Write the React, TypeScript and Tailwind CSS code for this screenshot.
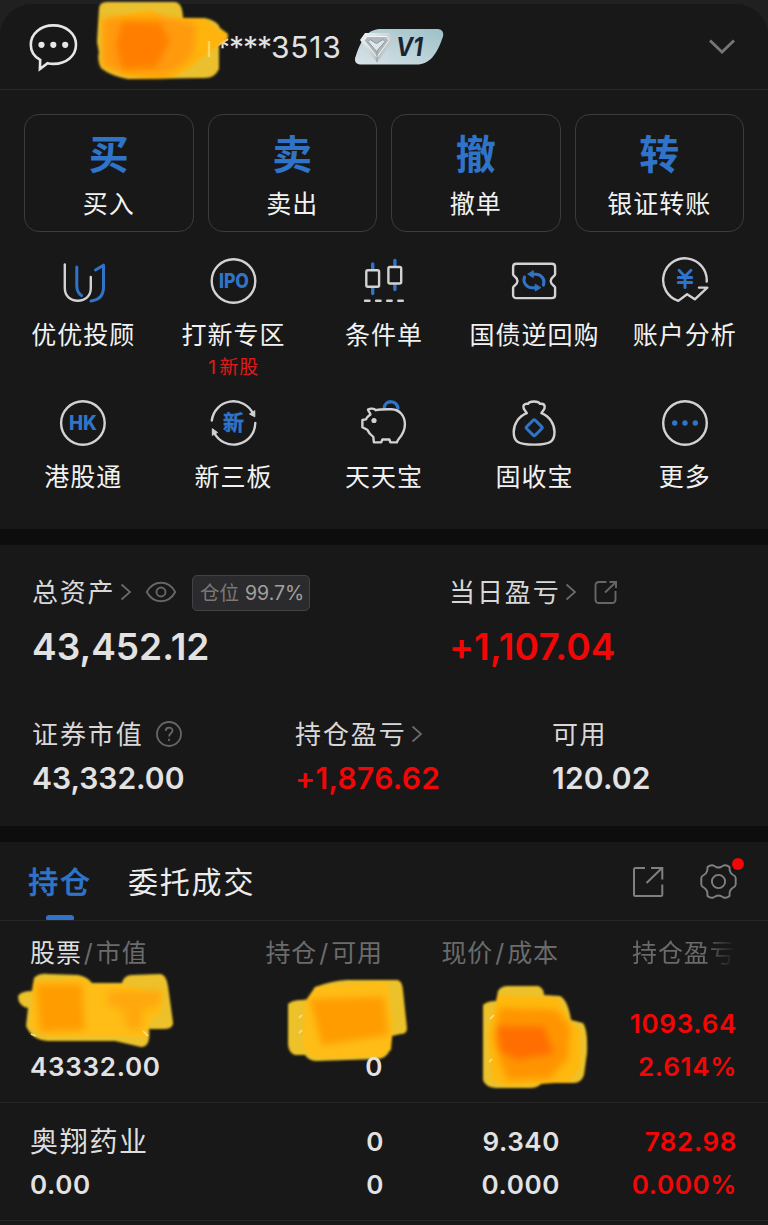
import React from "react";

const LIGHT = "#d2d2d2";
const BLUE = "#2f74c8";

const QuickIcon = ({ children }: { children: React.ReactNode }) => (
  <svg
    width="48"
    height="48"
    viewBox="0.5 0 48 48"
    fill="none"
    stroke={LIGHT}
    strokeWidth="2.4"
    strokeLinecap="round"
    strokeLinejoin="round"
  >
    {children}
  </svg>
);

const CircleText = ({ text, width, size }: { text: string; width: number; size: number }) => (
  <text
    x="24.4"
    y="31"
    textAnchor="middle"
    fontFamily="Inter, sans-serif"
    fontWeight="800"
    fontSize={size}
    textLength={width}
    lengthAdjust="spacingAndGlyphs"
    fill={BLUE}
    stroke="none"
  >
    {text}
  </text>
);

const UIcon = () => (
  <QuickIcon>
    <path d="M6.3 7.5V31c0 8 5.500 12.700 13 12.700S32.300 39 32.300 31V20" />
    <g stroke={BLUE} strokeWidth="3">
      <path d="M18.300 10v19c0 4.500 1.600 7.500 4.700 9.600" />
      <path d="M37 13l8-4.800V30c0 8-4.500 13-12.500 14" />
    </g>
  </QuickIcon>
);

const IpoIcon = () => (
  <QuickIcon>
    <circle cx="24" cy="24" r="21.800" />
    <CircleText text="IPO" width={30} size={19.5} />
  </QuickIcon>
);

const HkIcon = () => (
  <QuickIcon>
    <circle cx="24.400" cy="24" r="21.800" />
    <CircleText text="HK" width={28} size={20} />
  </QuickIcon>
);

const CandleIcon = () => (
  <QuickIcon>
    <path d="M13.200 7v5.500M13.200 31v5.500M35.400 3.500v5.500M35.400 27.500v5" stroke={BLUE} strokeWidth="3.400" />
    <rect x="6.800" y="13.300" width="12.800" height="16.500" rx="1.500" />
    <rect x="28.900" y="10" width="12.800" height="16.500" rx="1.500" />
    <path d="M5.500 43.700h4.500M16.600 43.700h4.500M27.700 43.700h4.500M38.800 43.700h4.500" strokeWidth="2.400" />
  </QuickIcon>
);

const TicketIcon = () => (
  <QuickIcon>
    <path d="M6.800 6.700h35.600c2 0 3.200 1.200 3.200 3.200v7.600c0 1.500-4.400 2.500-4.400 6.500s4.400 5 4.400 6.500v7.400c0 2-1.200 3.200-3.200 3.200H6.800c-2 0-3.200-1.200-3.200-3.200v-7.400c0-1.500 4.400-2.500 4.400-6.500s-4.400-5-4.400-6.500V9.900c0-2 1.200-3.200 3.200-3.200z" />
    <g stroke={BLUE} strokeWidth="3">
      <path d="M22 17.300h4.500c5 0 9.600 5 7.400 10.800" />
      <path d="M15 20c-2 5.500 2 10.700 7.500 10.700H27" />
      <path d="M23.800 14v6.500l-5.300-3.200zM25.700 27.500v6.500l5.300-3.200z" fill={BLUE} strokeWidth="1" />
    </g>
  </QuickIcon>
);

const AnalysisIcon = () => (
  <QuickIcon>
    <path d="M46.200 24.600A21.800 21.800 0 1 0 17.800 43.900l8.800-6.700 7.700 5.100 12.500-11.700h-8.300" />
    <path d="M18.500 13.300l6 6.200 6-6.200M24.500 20v10.500M17.800 20.500h13.400M17.800 25.600h13.400" stroke={BLUE} strokeWidth="3" />
  </QuickIcon>
);

const BoardIcon = () => (
  <QuickIcon>
    <path d="M2.300 21.500A21.800 21.800 0 0 1 43.500 14.500M45.800 24A21.800 21.800 0 0 1 4.500 33.500" />
    <path d="M45.300 12v5.800l-5-2.600zM2.800 36v-6.300l5 3.600z" fill={LIGHT} strokeWidth="1" />
    <text
      x="24"
      y="31.300"
      textAnchor="middle"
      fontFamily="'Noto Sans CJK SC', sans-serif"
      fontWeight="700"
      fontSize="21"
      fill={BLUE}
      stroke={BLUE}
      strokeWidth="0.400"
    >
      新
    </text>
  </QuickIcon>
);

const PiggyIcon = () => (
  <QuickIcon>
    <path d="M24.800 8.300c1.200-7.500 12-7.500 13.700.8" stroke={BLUE} strokeWidth="3.300" />
    <path d="M16.500 11.200c4-1 11-1 15.700-.9 8 .3 13.200 6.700 13.200 15.200 0 6.500-3.200 11-6 14.300-1 1.200-1.500 2-2 3.600h-6.500l-1-2.900h-7l-1.200 2.900h-7.300l-.6-5.500c-2.500-1.800-4.600-4-6-7.200l-4.900-2.500v-7.200l3.500-.6c1-2 2.500-3.700 4.500-5-.3-1.800-1.800-2.700-2.400-4.800 2.500-1.500 6-1 8 .6z" />
    <circle cx="14.500" cy="21.500" r="2.600" fill={LIGHT} stroke="none" />
  </QuickIcon>
);

const BagIcon = () => (
  <QuickIcon>
    <path d="M17.300 14.200C9 17.500 4.200 25 4.200 33c0 9 3.300 12.600 20.300 12.600S45 42 45 33c0-8-4.800-15.500-13.100-18.800 1.500-2.600 3.900-3.900 3.300-7-.5-2.200-2.800-2.700-4.700-2.300-1.500-3.300-10.500-3.300-12 0-2-.5-4.300.2-4.600 2.300-.5 3.100 1.900 4.400 3.400 7z" />
    <rect x="18.700" y="22.700" width="12" height="12" rx="1.500" transform="rotate(45 24.700 28.700)" stroke={BLUE} strokeWidth="3" />
  </QuickIcon>
);

const MoreIcon = () => (
  <QuickIcon>
    <circle cx="24.500" cy="24" r="21.800" />
    <g fill={BLUE} stroke="none">
      <circle cx="14.200" cy="24" r="2.700" />
      <circle cx="24.500" cy="24" r="2.700" />
      <circle cx="34.800" cy="24" r="2.700" />
    </g>
  </QuickIcon>
);

const Chevron = () => (
  <svg width="12" height="18" viewBox="0 0 12 18" fill="none" stroke="#6c6c6c" strokeWidth="1.700">
    <path d="M1.500 1.500L10 9l-8.500 7.500" />
  </svg>
);

const actions = [
  { mark: "买", label: "买入" },
  { mark: "卖", label: "卖出" },
  { mark: "撤", label: "撤单" },
  { mark: "转", label: "银证转账" },
];

const shortcuts = [
  { label: "优优投顾", Icon: UIcon },
  { label: "打新专区", Icon: IpoIcon, note: "1新股" },
  { label: "条件单", Icon: CandleIcon },
  { label: "国债逆回购", Icon: TicketIcon },
  { label: "账户分析", Icon: AnalysisIcon },
  { label: "港股通", Icon: HkIcon },
  { label: "新三板", Icon: BoardIcon },
  { label: "天天宝", Icon: PiggyIcon },
  { label: "固收宝", Icon: BagIcon },
  { label: "更多", Icon: MoreIcon },
];

const Header = () => (
  <div className="bg-[#202020] pt-1">
    <header className="relative flex h-[86px] items-center rounded-t-[32px] border-b border-[#2a2a2a] bg-[#181818]">
      <svg className="ml-[27px] shrink-0" width="52" height="52" viewBox="27 20 52 52" fill="none">
        <path
          d="M40.200 58.800C34 55.500 30.800 50 30.800 43.700 30.800 32.700 40.500 24.400 53.400 24.400S76 32.700 76 43.700 66.300 62.900 53.400 62.900c-2 0-4-.2-5.800-.7l-7.700 5.800z"
          stroke="#e6e6e6"
          strokeWidth="2.600"
        />
        <g fill="#e6e6e6">
          <circle cx="41.500" cy="43.800" r="3.100" />
          <circle cx="53.300" cy="43.800" r="3.100" />
          <circle cx="65.200" cy="43.800" r="3.100" />
        </g>
      </svg>
      <div className="ml-[136px] flex h-10 w-[128px] items-center text-[30px] leading-10 text-[#e2e2e2]">
        <span className="w-[56px] tracking-[-1px]">****</span>
        <span className="tracking-[0.800px]">3513</span>
      </div>
      <svg className="ml-[11px]" width="90" height="38" viewBox="354 28 90 38">
        <defs>
          <linearGradient id="badge" x1="0" y1="1" x2="1" y2="0">
            <stop offset="0" stopColor="#d9e4e8" />
            <stop offset="1" stopColor="#9dc0c8" />
          </linearGradient>
          <linearGradient id="gem" x1="0" y1="0" x2="1" y2="1">
            <stop offset="0" stopColor="#f4f6f7" />
            <stop offset="1" stopColor="#a3adb2" />
          </linearGradient>
        </defs>
        <path d="M381 29h56c5.500 0 7.500 4 5.500 9-6 17-13 26.500-26 26.500h-55c-6 0-8-4-5.500-9C362 38 368 29 381 29z" fill="url(#badge)" />
        <path d="M365 33h24l4 7-16 22.500L360 40z" fill="url(#gem)" />
        <path d="M367 36.500h19.500l2.500 4L377 57l-13-16.500z" fill="#aeb8bd" stroke="#f4f7f8" strokeWidth="1" />
        <path d="M370 39.500l6.500 4 6.500-4 2 2-8.500 10-8.500-10z" fill="#dfe6e8" stroke="#8a959a" strokeWidth="1" />
        <path d="M377 51.500V62" stroke="#8a959a" strokeWidth="0.800" />
        <text
          x="396"
          y="56"
          fontFamily="Inter, sans-serif"
          fontSize="26"
          fontWeight="700"
          fontStyle="italic"
          textLength="27"
          lengthAdjust="spacingAndGlyphs"
          fill="#1a2433"
        >
          V1
        </text>
      </svg>
      <svg className="mr-8 ml-auto" width="28" height="18" viewBox="0 0 28 18" fill="none">
        <path d="M2 2.500l12 11.500L26 2.500" stroke="#767676" strokeWidth="2.800" />
      </svg>
      <svg className="absolute top-[-4px] left-[92px]" width="142" height="86" viewBox="92 0 142 86">
        <g filter="url(#soft)">
          <path d="M99 9q0-7 8-7h68q8 1 8 17l22-1q13 3 15 10l8 6q1 8-9 9v26q-4 9-14 9l-77 1q-17-3-27-11-4-8-2-16l-2-10z" fill="#ebc02d" />
          <path d="M101 20q24-6 50-10l16 8h33q14 4 15 10l12 5-2 8-20 14-18 15-14 7q-25 3-48-2l-22-9z" fill="#ffb40f" />
        </g>
        <g filter="url(#softer)">
          <path d="M104 18l60-1 32 8-3 30-16 14-14 6-38-1-22-9z" fill="#ff9a08" />
          <path d="M122 21l38 2 10 18-14 26-34 2-6-24z" fill="#ff7e02" />
        </g>
        <path d="M209 41v16" stroke="#ffd75a" strokeWidth="2.400" />
      </svg>
    </header>
  </div>
);

const Shortcuts = () => (
  <section className="h-[439px] px-2 pt-6">
    <div className="grid grid-cols-4 gap-[14px] px-4">
      {actions.map((item) => (
        <button key={item.label} className="flex h-[118px] flex-col items-center rounded-[15px] border border-[#3c3c3c] pt-[17px]">
          <span className="text-[40px] leading-[46px] font-bold text-[#2f74c8]">{item.mark}</span>
          <span className="mt-2 text-[25px] leading-9 tracking-[1px] text-[#f2f2f2]">{item.label}</span>
        </button>
      ))}
    </div>
    <div className="mt-[25px] grid grid-cols-5">
      {shortcuts.map(({ label, Icon, note }) => (
        <button key={label} className="flex h-[142px] flex-col items-center">
          <Icon />
          <span className="mt-3 text-[25px] leading-9 tracking-[1px] whitespace-nowrap text-[#f2f2f2]">{label}</span>
          {note && (
            <span className="mt-px flex text-[19px] leading-7 tracking-[0.700px] text-[#e01a1a]">
              <span className="mr-[3px]">1</span>
              {note.slice(1)}
            </span>
          )}
        </button>
      ))}
    </div>
  </section>
);

const Summary = () => (
  <section className="h-[281px] pt-[23px] pl-8 text-[#d8d8d8]">
    <div className="grid grid-cols-[417px_1fr]">
      <div>
        <div className="flex h-12 items-center">
          <span className="text-[26px] tracking-[1.700px]">总资产</span>
          <span className="ml-[5px]"><Chevron /></span>
          <svg className="ml-[13px]" width="32" height="24" viewBox="0 0 32 24" fill="none" stroke="#666" strokeWidth="1.900">
            <path d="M1.800 12C5 6 10 2.800 16 2.800S27 6 30.200 12C27 18 22 21.200 16 21.200S5 18 1.800 12z" />
            <circle cx="16" cy="12" r="4.500" />
          </svg>
          <span className="mt-[2px] ml-[15px] flex h-9 w-[118px] items-center justify-center rounded-[5px] border border-[#424244] bg-[#2b2b2d] pt-px pl-[2px]">
            <span className="text-[19.5px] text-[#7a7a7a]">仓位</span>
            <span className="ml-[6px] text-[19.5px] text-[#a0a0a0]">99.7%</span>
          </span>
        </div>
        <div className="mt-[7px] text-[37px] leading-[48px] font-semibold text-[#e2e2e2]">43,452.12</div>
      </div>
      <div>
        <div className="flex h-12 items-center">
          <span className="text-[26px] tracking-[1.900px]">当日盈亏</span>
          <span className="ml-[4px]"><Chevron /></span>
          <svg className="ml-[17px]" width="24" height="26" viewBox="0 0 24 26" fill="none" stroke="#666" strokeWidth="1.900">
            <path d="M12.500 3H5C2.500 3 1.500 4 1.500 6.500v14C1.500 23 2.500 24 5 24h13c2.500 0 3.500-1 3.500-3.500V12" />
            <path d="M11 13.500L22 3M15.500 3H22v6" />
          </svg>
        </div>
        <div className="mt-[7px] text-[37px] leading-[48px] font-semibold tracking-[0.200px] text-[#f20606]">+1,107.04</div>
      </div>
    </div>
    <div className="mt-[41px] grid grid-cols-[263px_257px_1fr]">
      <div>
        <div className="flex h-11 items-center">
          <span className="text-[26px] tracking-[1.900px]">证券市值</span>
          <svg className="ml-[12px]" width="26" height="26" viewBox="0 0 26 26" fill="none" stroke="#666" strokeWidth="1.800">
            <circle cx="13" cy="13" r="12" />
            <path d="M9.700 10c0-4.500 6.800-4.300 6.800-.4 0 2.800-3.400 2.600-3.400 5.800M13 17.800v2.200" />
          </svg>
        </div>
        <div className="text-[30px] leading-[44px] font-semibold text-[#e2e2e2]">43,332.00</div>
      </div>
      <div>
        <div className="flex h-11 items-center">
          <span className="text-[26px] tracking-[1.900px]">持仓盈亏</span>
          <span className="ml-[4px]"><Chevron /></span>
        </div>
        <div className="text-[30px] leading-[44px] font-semibold tracking-[0.300px] text-[#f20606]">+1,876.62</div>
      </div>
      <div>
        <div className="flex h-11 items-center">
          <span className="text-[26px] tracking-[1.500px]">可用</span>
        </div>
        <div className="text-[30px] leading-[44px] font-semibold tracking-[0.200px] text-[#e2e2e2]">120.02</div>
      </div>
    </div>
  </section>
);

const Tabs = () => (
  <div className="flex h-[79px] items-start border-b border-[#262626] pl-[29px]">
    <div className="flex w-[62px] flex-col items-center">
      <span className="mt-[15px] h-[50px] text-[30px] leading-[50px] font-medium tracking-[1.800px] whitespace-nowrap text-[#2f74c8] [-webkit-text-stroke:0.5px_#2f74c8]">持仓</span>
      <span className="mt-2 h-[5px] w-7 rounded-t-[3px] rounded-b-[1px] bg-[#2f74c8]" />
    </div>
    <span className="mt-[15px] ml-[37px] text-[30px] leading-[50px] tracking-[1.800px] text-[#ececec]">委托成交</span>
    <svg className="mt-6 mr-[35px] ml-auto" width="33" height="32" viewBox="632 866 33 32" fill="none" stroke="#808080" strokeWidth="2">
      <path d="M645 868h-9.500q-1.500 0-1.500 1.500v25q0 1.500 1.500 1.500h25.300q1.500 0 1.500-1.500V884.500M646.500 883l15.500-15M651 868h11.300v11.500" />
    </svg>
    <div className="relative mt-5 mr-[30px]">
      <svg width="38" height="38" viewBox="-18.500 -19.500 38 38" fill="none" stroke="#808080" strokeWidth="1.900">
        <path d="M-11-14.500q3-2.500 6-1.500l2.500 1.500Q0-13.500 2.500-14.500L5-16q3-1 6 1.500l.2 3.500q.8 3 3.500 4.500 2.300 1 2.500 3v6.500q-.2 2-2.500 3-2.700 1.500-3.500 4.500L11 14.500Q8 17 5 16l-2.500-1.500Q0 13.500-2.500 14.500L-5 16q-3 1-6-1.500l-.2-4q-.8-3-3.500-4.500-2.300-1-2.500-3v-6.500q.2-2 2.500-3 2.700-1.500 3.500-4.500z" />
        <circle r="6.600" />
      </svg>
      <span className="absolute top-[-4px] right-[-6px] h-3 w-3 rounded-full bg-[#f00808]" />
    </div>
  </div>
);

const Holdings = () => (
  <section>
    <div className="grid h-[63px] grid-cols-[200px_153px_176px_177px] items-center pt-[2px] pl-[30px] text-[25px] tracking-[0.900px] whitespace-nowrap text-[#6b6b6b]">
      <div><span className="text-[#dedede]">股票</span><span className="mx-[2px]">/</span>市值</div>
      <div className="text-right">持仓<span className="mx-[2px]">/</span>可用</div>
      <div className="text-right">现价<span className="mx-[2px]">/</span>成本</div>
      <div className="bg-gradient-to-r from-[#6b6b6b] from-[82%] to-[#181818] bg-clip-text pl-[73px] text-transparent">
        持仓盈亏
      </div>
    </div>
    <div className="relative grid h-[119px] grid-cols-[200px_153px_177px_177px] border-b border-[#262626] pt-[18px] pl-[30px] text-[26px] leading-[43px] font-semibold tracking-[0.700px] text-[#e2e2e2]">
      <div className="pt-[43px]">43332.00</div>
      <div className="relative z-10 pt-[43px] text-right">0</div>
      <div />
      <div className="text-right text-[#f20606]">
        <div>1093.64</div>
        <div>2.614%</div>
      </div>
      <svg className="absolute top-[-14px] left-[12px]" width="168" height="84" viewBox="12 970 168 84">
        <g filter="url(#soft)">
          <path d="M18 996q3-5 14-5l2-13q5-5 14-4l30 1q10 2 14 8l30 0q2-8 10-8l28-1q6 0 8 12l5 36q1 6-8 7h-16q2 18-8 18l-26-6H48q-16-1-22-15l2-18q-10-2-10-12z" fill="#edc12c" />
          <path d="M34 982l48-4 10 7h34l36 10v14l-12 14-6 14-22-1H48l-18-10z" fill="#ffbd12" />
        </g>
        <g filter="url(#softer)">
          <path d="M36 984h46l3 46-45 2z" fill="#ff9d05" />
          <path d="M108 991h54l-4 16-14 2-4 22-14-4-2-16-16-6z" fill="#ffa808" />
        </g>
        <path d="M143 1031l5 5M31 1034l5 2" stroke="#ffe08a" strokeWidth="1.600" />
      </svg>
      <svg className="absolute top-[-10px] left-[282px]" width="132" height="96" viewBox="282 974 132 96">
        <g filter="url(#soft)">
          <path d="M288 1004q4-4 14-4l9-1 4-12q16-6 32-7h50q5 0 6 10l4 38q0 6-6 6l-9 2-2 14q-4 9-13 9l-60 2q-8 0-12-6l-10 0q-6-2-7-10z" fill="#ecc12c" />
          <path d="M315 987l72-5 6 40-2 28-12 6-62 2-14-10 2-46z" fill="#ffbd12" />
        </g>
        <g filter="url(#softer)">
          <path d="M310 999l74-2 4 38-66 10z" fill="#ff9c06" />
        </g>
        <path d="M299 1018l3-3M299 1033l3-3" stroke="#ffe08a" strokeWidth="1.600" />
      </svg>
      <svg className="absolute top-[-4px] left-[476px]" width="118" height="114" viewBox="476 980 118 114">
        <g filter="url(#soft)">
          <path d="M483 1005q4-4 13-4l2-10q3-5 10-5h30q6 2 6 9l16 1q8 4 11 24l12 3q5 6 4 30l-3 22q-3 8-10 8l-32 0q-4 5-12 5h-34q-11-1-13-8z" fill="#ecc12c" />
          <path d="M498 995l60 3 12 24 10 8v36l-10 16-62 4-16-6-4-48z" fill="#ffb810" />
        </g>
        <g filter="url(#softer)">
          <path d="M500 1008l56 2 14 16-2 32-18 20-42 2-8-18-6-24z" fill="#ff9406" />
          <path d="M496 1026l48 0 10 28-36 6-18-8z" fill="#ff6e02" />
        </g>
        <path d="M490 1019l4-4M489 1062l3-3" stroke="#ffe08a" strokeWidth="1.600" />
      </svg>
    </div>
    <div className="grid h-[118px] grid-cols-[200px_154px_176px_177px] border-b border-[#262626] pt-[17px] pl-[30px] text-[26px] leading-[43px] font-semibold tracking-[0.600px] text-[#e2e2e2]">
      <div>
        <div className="h-[43px] pt-px text-[28px] font-normal tracking-[1.700px] text-[#dedede]">奥翔药业</div>
        <div>0.00</div>
      </div>
      <div className="text-right">
        <div>0</div>
        <div>0</div>
      </div>
      <div className="text-right">
        <div>9.340</div>
        <div>0.000</div>
      </div>
      <div className="text-right text-[#f20606]">
        <div>782.98</div>
        <div>0.000%</div>
      </div>
    </div>
  </section>
);

const App = () => (
  <div className="h-[1225px] w-[768px] overflow-hidden bg-[#181818] font-['Inter','Noto_Sans_CJK_SC',sans-serif]">
    <svg width="0" height="0" className="absolute">
      <defs>
        <filter id="soft"><feGaussianBlur stdDeviation="1.300" /></filter>
        <filter id="softer" x="-30%" y="-30%" width="160%" height="160%"><feGaussianBlur stdDeviation="3.500" /></filter>
      </defs>
    </svg>
    <Header />
    <Shortcuts />
    <div className="h-4 bg-[#0d0d0d]" />
    <Summary />
    <div className="h-4 bg-[#0d0d0d]" />
    <Tabs />
    <Holdings />
  </div>
);

export default App;
